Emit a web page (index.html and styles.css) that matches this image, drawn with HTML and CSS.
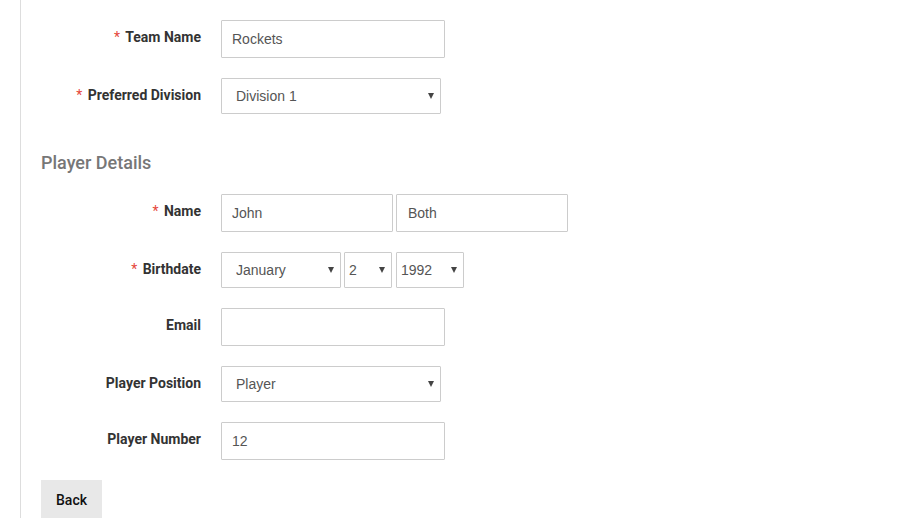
FILE: index.html
```html
<!DOCTYPE html>
<html lang="en">
<head>
<meta charset="utf-8">
<title>Team Registration</title>
<link rel="stylesheet" href="styles.css">
</head>
<body>
<div class="panel">
  <form class="form">
    <div class="row">
      <label class="label"><span class="req">*</span> Team Name</label>
      <div class="controls"><input class="input w-lg" type="text" value="Rockets"></div>
    </div>
    <div class="row">
      <label class="label"><span class="req">*</span> Preferred Division</label>
      <div class="controls">
        <span class="sel w-sel"><select class="select"><option>Division 1</option></select></span>
      </div>
    </div>

    <h3 class="section">Player Details</h3>

    <div class="row">
      <label class="label"><span class="req">*</span> Name</label>
      <div class="controls name">
        <input class="input w-name" type="text" value="John">
        <input class="input w-name" type="text" value="Both">
      </div>
    </div>
    <div class="row">
      <label class="label"><span class="req">*</span> Birthdate</label>
      <div class="controls date">
        <span class="sel w-month"><select class="select"><option>January</option></select></span>
        <span class="sel w-day"><select class="select small"><option>2</option></select></span>
        <span class="sel w-year"><select class="select small"><option>1992</option></select></span>
      </div>
    </div>
    <div class="row">
      <label class="label">Email</label>
      <div class="controls"><input class="input w-lg" type="text" value=""></div>
    </div>
    <div class="row">
      <label class="label">Player Position</label>
      <div class="controls">
        <span class="sel w-sel"><select class="select"><option>Player</option></select></span>
      </div>
    </div>
    <div class="row">
      <label class="label">Player Number</label>
      <div class="controls"><input class="input w-lg" type="text" value="12"></div>
    </div>

    <div class="actions">
      <button type="button" class="btn">Back</button>
    </div>
  </form>
</div>
</body>
</html>
```

FILE: styles.css
```css
html, body {
  margin: 0;
  padding: 0;
  background: #fff;
  height: 100%;
  overflow: hidden;
}
body {
  font-family: Roboto, "Liberation Sans", Arial, sans-serif;
  color: #333;
}
.panel {
  margin-left: 20px;
  border-left: 1px solid #ddd;
  min-height: 100%;
  padding: 20px 0 0 20px;
  box-sizing: border-box;
}
.form {
  display: flex;
  flex-direction: column;
}
.row {
  display: grid;
  grid-template-columns: 160px auto;
  column-gap: 20px;
  margin-bottom: 20px;
  align-items: start;
}
.label {
  text-align: right;
  font-weight: 700;
  font-size: 14px;
  line-height: 20px;
  padding-top: 7px;
  color: #333;
}
.req {
  color: #e5473b;
  font-weight: 400;
  margin-right: 2px;
}
.controls {
  display: flex;
  align-items: flex-start;
}
.name { gap: 3px; }
.date { gap: 3px; }
.date .w-year { margin-left: 1px; }

.input {
  box-sizing: border-box;
  height: 38px;
  border: 1px solid #ccc;
  border-radius: 1px;
  padding: 0 10px;
  font-family: "Liberation Sans", Arial, sans-serif;
  font-size: 14px;
  color: #555;
  background: #fff;
  outline: none;
  margin: 0;
}
.w-lg { width: 224px; }
.w-name { width: 172px; }
.name .input:last-child { padding-left: 11px; }

.sel {
  position: relative;
  display: inline-block;
}
.sel::after {
  content: "";
  position: absolute;
  right: 7px;
  top: 15px;
  width: 0;
  height: 0;
  border-left: 3px solid transparent;
  border-right: 3px solid transparent;
  border-top: 6px solid #444;
  pointer-events: none;
}
.select {
  -webkit-appearance: none;
  appearance: none;
  box-sizing: border-box;
  width: 100%;
  height: 36px;
  border: 1px solid #ccc;
  border-radius: 1px;
  padding: 0 20px 0 14px;
  font-family: "Liberation Sans", Arial, sans-serif;
  font-size: 14px;
  color: #555;
  background: #fff;
  outline: none;
  margin: 0;
  display: block;
}
.select.small { padding-left: 4px; }
.w-sel { width: 220px; }
.w-month { width: 120px; }
.w-day { width: 48px; }
.w-year { width: 68px; }

.section {
  margin: 18px 0 20px 0;
  font-size: 18px;
  line-height: 22px;
  font-weight: 500;
  color: #777;
}
.actions {
  display: flex;
}
.btn {
  font-family: Roboto, "Liberation Sans", Arial, sans-serif;
  font-size: 14px;
  font-weight: 500;
  color: #111;
  background: #e8e8e8;
  border: none;
  border-radius: 0;
  padding: 0 15px;
  height: 40px;
  line-height: 40px;
}
```
